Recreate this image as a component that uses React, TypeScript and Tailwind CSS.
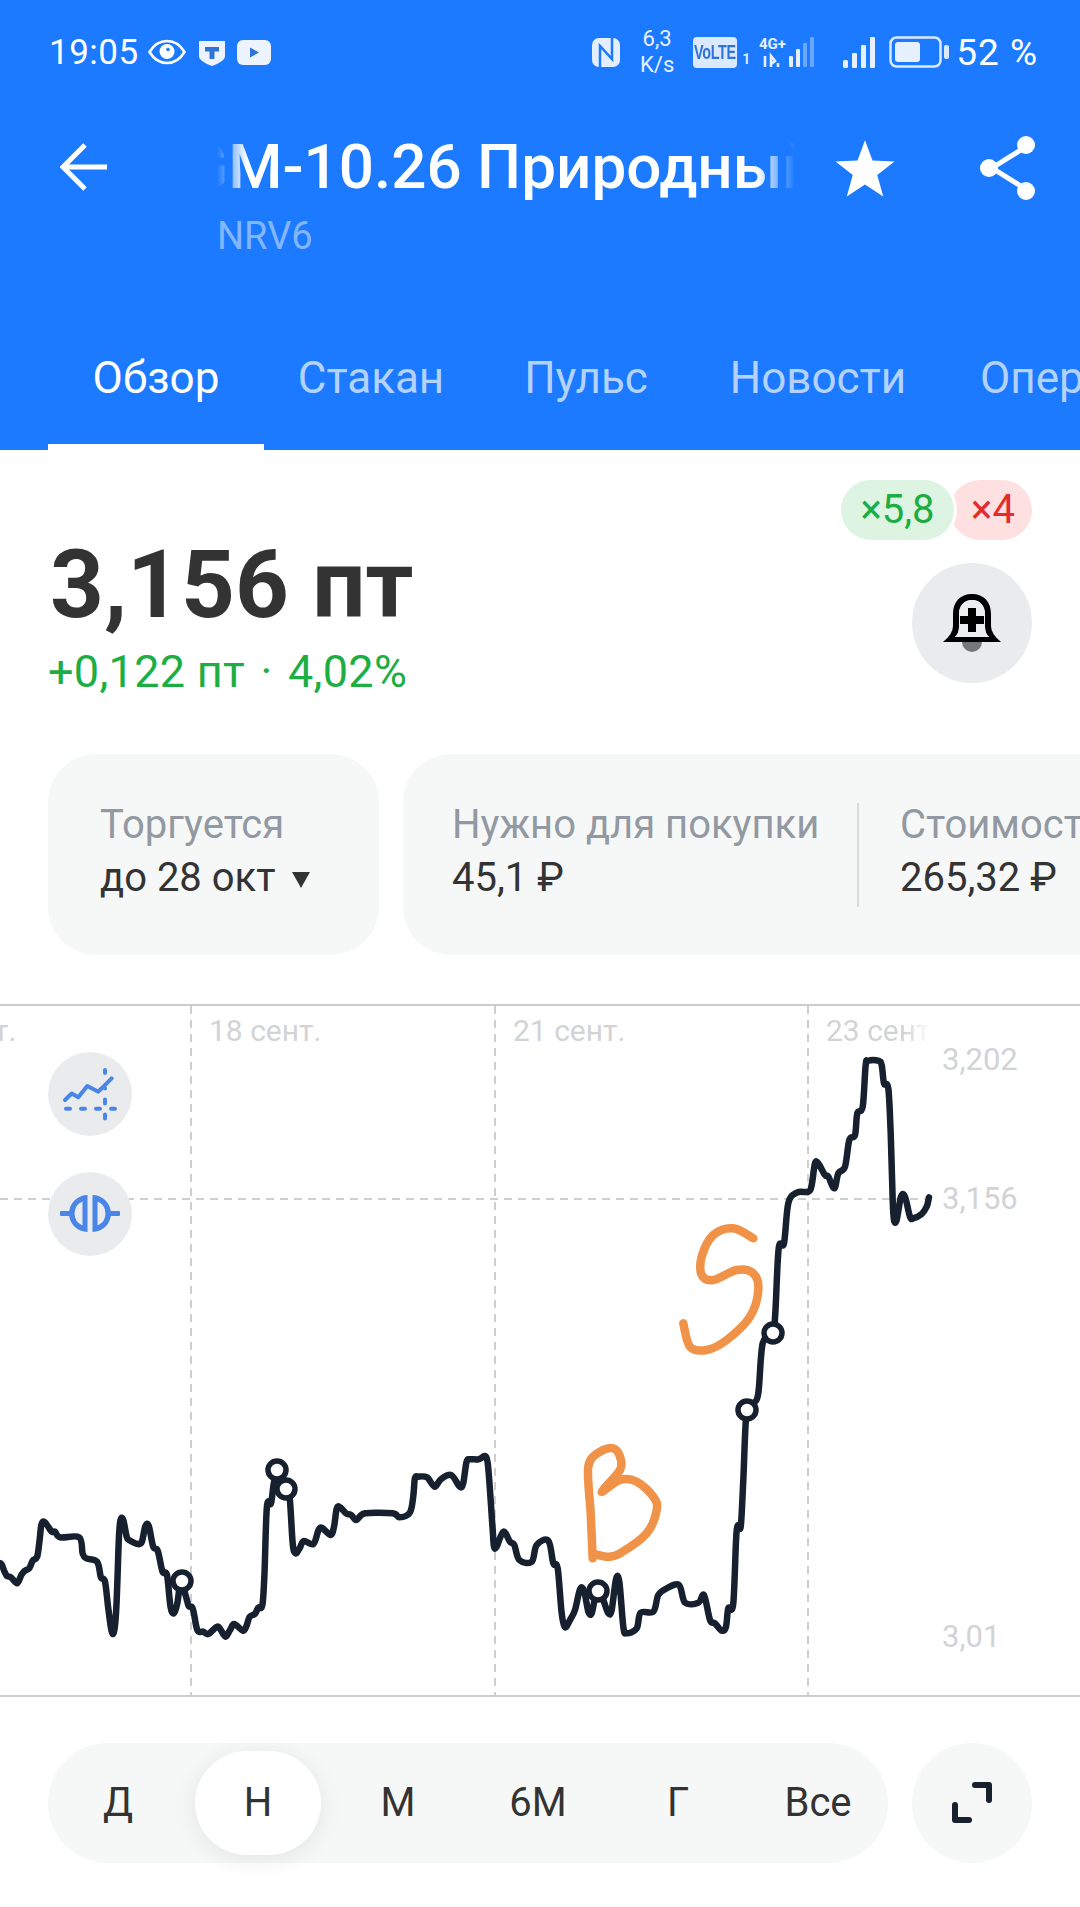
const FONT = "font-['Roboto','Noto_Sans',sans-serif]";

// chart points as read from the picture, page coordinates
type Pt = [number, number];

const fromWide = (pts: Pt[]): Pt[] => pts.map(([x, y]) => [x / 2.904, 1340 + y / 3]);
const fromLower = (pts: Pt[]): Pt[] => pts.map(([x, y]) => [480 + x / 3, 1180 + y / 3]);
const fromUpper = (pts: Pt[]): Pt[] => pts.map(([x, y]) => [700 + x / 3, 1000 + y / 3]);

const PRICE_LINE: Pt[] = [
  ...fromWide([
    [-6, 668], [4, 672], [12, 692], [20, 708], [32, 712], [50, 730], [62, 705], [72, 692], [85, 685], [95, 662], [108, 650],
    [115, 600], [120, 555], [128, 545], [140, 560], [150, 575], [160, 575], [175, 592], [230, 592], [240, 640], [250, 655],
    [282, 665], [293, 712], [305, 725], [315, 810], [327, 882], [337, 820], [345, 600], [350, 540], [358, 540], [368, 590],
    [375, 600], [400, 612], [412, 605], [422, 558], [432, 558], [445, 620], [458, 632], [472, 695], [485, 705], [495, 800],
    [505, 820], [515, 790], [525, 725], [540, 770], [548, 798], [560, 806], [573, 870], [590, 875], [605, 882], [630, 860],
    [640, 868], [655, 890], [668, 870], [680, 852], [705, 872], [715, 860], [725, 830], [740, 822], [750, 803], [762, 795],
    [768, 700], [775, 500], [787, 490], [795, 430], [806, 392], [822, 420], [835, 450], [842, 480], [850, 610], [858, 640], [870, 625],
    [882, 603], [910, 612], [925, 570], [935, 563], [960, 585], [970, 560], [978, 505], [988, 502], [1005, 520], [1020, 525],
    [1035, 540], [1060, 520], [1140, 520], [1160, 532], [1190, 518], [1200, 470], [1205, 415], [1215, 410], [1240, 412],
    [1262, 440], [1280, 418], [1310, 405], [1335, 440], [1345, 430], [1355, 365], [1365, 358], [1390, 358],
  ]),
  ...fromLower([
    [18, 830], [26, 880], [38, 1050], [42, 1100], [50, 1100], [70, 1055], [90, 1085], [103, 1095], [118, 1140], [155, 1145],
    [170, 1095], [205, 1082], [220, 1150], [233, 1165], [245, 1300], [255, 1342], [270, 1320], [285, 1290], [300, 1228],
    [312, 1232], [325, 1295], [335, 1300], [345, 1255], [356, 1232], [370, 1260], [385, 1300], [395, 1290], [408, 1198],
    [418, 1205], [430, 1340], [440, 1360], [470, 1345], [482, 1298], [520, 1295], [535, 1245], [560, 1225], [597, 1215],
    [615, 1268], [655, 1268], [672, 1245], [690, 1320], [705, 1330], [725, 1352], [738, 1340], [745, 1285], [760, 1270],
    [770, 1050], [782, 1040], [790, 900], [800, 690], [820, 670], [835, 640], [848, 490], [878, 460],
  ]),
  ...fromUpper([
    [226, 940], [236, 745], [252, 730], [265, 610], [290, 578], [325, 575], [335, 555], [345, 490], [355, 490], [375, 525], [385, 530],
    [403, 565], [415, 520], [435, 500], [448, 420], [465, 405], [472, 340], [488, 320], [497, 195], [505, 182], [535, 182],
    [545, 195], [552, 250], [565, 265], [572, 400], [578, 600], [582, 660], [590, 660], [603, 590], [615, 590], [630, 650],
    [640, 655], [665, 642], [680, 620], [687, 592],
  ]),
];

const MARKERS: Pt[] = [[182, 1581], [277, 1470], [286, 1489], [598, 1591], [747, 1410], [773, 1333]];

const LETTER_B: Pt[] = fromLower([
  [338, 1135], [332, 1000], [325, 860], [360, 815], [400, 805], [420, 830], [420, 870], [365, 935], [420, 900], [470, 905],
  [520, 950], [530, 990], [500, 1060], [420, 1120], [380, 1130], [338, 1120],
]);

const LETTER_S: Pt[] = fromLower([
  [820, 175], [760, 145], [700, 165], [665, 230], [665, 285], [700, 300], [770, 270], [820, 280], [835, 330], [810, 410],
  [740, 480], [680, 510], [630, 500], [610, 430],
]);

function smoothPath(pts: Pt[]) {
  const k = 1 / 6;
  let d = `M${pts[0][0].toFixed(1)} ${pts[0][1].toFixed(1)}`;
  for (let i = 0; i < pts.length - 1; i++) {
    const p0 = pts[Math.max(i - 1, 0)];
    const p1 = pts[i];
    const p2 = pts[i + 1];
    const p3 = pts[Math.min(i + 2, pts.length - 1)];
    const c1x = p1[0] + (p2[0] - p0[0]) * k;
    const c1y = p1[1] + (p2[1] - p0[1]) * k;
    const c2x = p2[0] - (p3[0] - p1[0]) * k;
    const c2y = p2[1] - (p3[1] - p1[1]) * k;
    d += `C${c1x.toFixed(1)} ${c1y.toFixed(1)} ${c2x.toFixed(1)} ${c2y.toFixed(1)} ${p2[0].toFixed(1)} ${p2[1].toFixed(1)}`;
  }
  return d;
}

function StatusBar() {
  return (
    <div className="flex h-[100px] items-center pl-[49px] pr-[42px] pt-[4px] text-white">
      <span className="text-[35px] leading-none w-[99px] tracking-[0.5px]">19:05</span>
      <svg width="38" height="26" viewBox="0 0 38 26" className="mr-[13px]">
        <path d="M1.5 13C6 5.5 12 2 19 2s13 3.500 17.500 11C32 20.500 26 24 19 24S6 20.500 1.500 13Z" fill="none" stroke="white" strokeWidth="2.6" />
        <circle cx="19" cy="12.500" r="7.500" fill="white" />
        <circle cx="20" cy="10.500" r="1.800" fill="#1b7aff" />
      </svg>
      <svg width="26" height="27" viewBox="0 0 26 27" className="mr-[12px]">
        <path d="M0 2h26v15c0 4-6 7.500-13 10C6 24.500 0 21 0 17Z" fill="#eef4ff" />
        <path d="M6 8h14v4.500h-4.500V20h-5v-7.500H6Z" fill="#2f73d6" />
      </svg>
      <svg width="34" height="25" viewBox="0 0 34 25" className="mr-auto">
        <rect width="34" height="25" rx="6" fill="#eef4ff" />
        <path d="M13 7.500 22 12.500 13 17.500Z" fill="#2f73d6" />
      </svg>

      <svg width="28" height="29" viewBox="0 0 28 29" className="mr-[19px]">
        <rect width="28" height="29" rx="7" fill="#e3eeff" />
        <path d="M8 29V8L20 21V0" fill="none" stroke="#1b7aff" strokeWidth="2.500" />
      </svg>
      <div className="flex flex-col items-center w-[36px] mr-[18px] text-[22px] leading-[26px] text-[#e6f0ff]">
        <span>6,3</span>
        <span>K/s</span>
      </div>
      <div className="flex h-[31px] w-[44px] items-center justify-center overflow-hidden rounded-[4px] bg-[#dbe9ff] text-[20px] font-bold tracking-[-0.5px] text-[#2f73d6] mr-[3px] font-['Liberation_Sans_Narrow','Liberation_Sans',sans-serif]">
        <span className="scale-x-[0.72]">VoLTE</span>
      </div>
      <span className="self-end mb-[30px] text-[14px] font-bold text-[#dbe9ff] w-[19px] pl-[2px]">1</span>
      <svg width="56" height="34" viewBox="0 0 56 34" className="mr-[28px]">
        <text x="0" y="14" fontSize="15" fontWeight="700" fill="#e6f0ff" fontFamily="Roboto">4G+</text>
        <path d="M6 32V21M12 32V21l4 5-4 3M19 32v-4" fill="none" stroke="#e6f0ff" strokeWidth="2.600" />
        <rect x="30" y="21" width="4" height="11" rx="1" fill="#e6f0ff" />
        <rect x="37" y="14" width="4" height="18" rx="1" fill="#e6f0ff" />
        <rect x="44" y="8" width="4" height="24" rx="1" fill="#6aa7ff" />
        <rect x="51" y="2" width="4" height="30" rx="1" fill="#6aa7ff" />
      </svg>
      <svg width="33" height="32" viewBox="0 0 33 32" className="mr-[13px]">
        <rect x="0" y="24" width="5" height="8" rx="1.500" fill="#e6f0ff" />
        <rect x="9" y="17" width="5" height="15" rx="1" fill="#e6f0ff" />
        <rect x="18" y="9" width="5" height="23" rx="1" fill="#e6f0ff" />
        <rect x="27" y="1" width="5" height="31" rx="1" fill="#e6f0ff" />
      </svg>
      <svg width="62" height="32" viewBox="0 0 62 32" className="mr-[5px]">
        <rect x="1.500" y="1.500" width="50" height="29" rx="6" fill="none" stroke="#dbe9ff" strokeWidth="2.500" />
        <rect x="6" y="6" width="25" height="20" rx="3" fill="#e6f0ff" />
        <rect x="55" y="9" width="5" height="14" rx="2" fill="#dbe9ff" />
      </svg>
      <span className="text-[37px] leading-none tracking-[1px]">52 %</span>
    </div>
  );
}

function TitleBar() {
  return (
    <div className="flex h-[138px] items-start pl-[60px] pr-[44px]">
      <svg width="50" height="50" viewBox="0 0 50 50" className="mt-[42px] w-[50px] shrink-0">
        <path d="M47 25H4M25 3 3 25l22 22" fill="none" stroke="white" strokeWidth="5" strokeLinejoin="miter" />
      </svg>
      <div className="ml-[107px] w-[578px] shrink-0 pt-[28px]">
        <div className="h-[78px] overflow-hidden [mask-image:linear-gradient(to_right,transparent_0,black_30px,black_540px,transparent_578px)]">
          <div className="whitespace-nowrap -ml-[31px] text-[62px] font-medium leading-[78px] text-white">GM-10.26 Природный газ</div>
        </div>
        <div className="text-[38px] leading-[40px] text-[#83b6ff] mt-[10px]">NRV6</div>
      </div>
      <svg width="60" height="58" viewBox="0 0 24 23.200" className="ml-[40px] mt-[39px] shrink-0">
        <path d="M12 0.500 15 8.600 23.800 9 16.900 14.400 19.300 23 12 18.200 4.700 23 7.100 14.400 0.200 9 9 8.600Z" fill="white" />
      </svg>
      <svg width="58" height="64" viewBox="0 0 58 64" className="ml-[85px] mt-[36px] shrink-0">
        <path d="M44 12 12 32l32 20" fill="none" stroke="white" strokeWidth="5" />
        <circle cx="46" cy="9" r="9" fill="white" />
        <circle cx="9" cy="32" r="9" fill="white" />
        <circle cx="46" cy="55" r="9" fill="white" />
      </svg>
    </div>
  );
}

const TABS = [
  { label: 'Обзор', width: 'w-[216px]', active: true },
  { label: 'Стакан', width: 'w-[214px]', active: false },
  { label: 'Пульс', width: 'w-[216px]', active: false },
  { label: 'Новости', width: 'w-[248px]', active: false },
  { label: 'Операции', width: 'w-[240px]', active: false },
];

function Tabs() {
  return (
    <div className="flex h-[212px] items-start overflow-hidden pl-[48px] pt-[114px]">
      {TABS.map((tab) => (
        <div key={tab.label} className={`${tab.width} shrink-0 h-[98px] relative`}>
          <div
            className={`text-[44px] leading-[52px] whitespace-nowrap ${
              tab.label === 'Операции' ? 'pl-[38px]' : 'text-center'
            } ${tab.active ? 'text-white' : 'text-[#b3d2ff]'}`}
          >
            {tab.label}
          </div>
          {tab.active && <div className="absolute inset-x-0 bottom-0 h-[6px] bg-white" />}
        </div>
      ))}
    </div>
  );
}

function PriceBlock() {
  return (
    <div className="flex h-[304px] justify-between pl-[50px] pr-[48px]">
      <div className="pt-[80px]">
        <div className="text-[94px] font-bold leading-[110px] text-[#333333]">3,156 пт</div>
        <div className="mt-[7px] -ml-[2px] text-[45px] leading-[50px] tracking-[0.3px] text-[#1cae42]">
          +0,122 пт <span className="mx-[4px]">·</span> 4,02%
        </div>
      </div>
      <div className="flex flex-col items-end pt-[30px]">
        <div className="flex h-[60px]">
          <div className="relative z-10 flex w-[113px] items-center justify-center rounded-full bg-[#dcf4e1] text-[40px] text-[#1cae42] ring-[3px] ring-white">
            ×5,8
          </div>
          <div className="flex w-[82px] -ml-[4px] items-center justify-center rounded-full bg-[#ffe0e1] text-[40px] text-[#e32c2c] pl-[4px]">
            ×4
          </div>
        </div>
        <div className="mt-[23px] flex h-[120px] w-[120px] items-center justify-center rounded-full bg-[#e9ebed]">
          <svg width="60" height="60" viewBox="0 0 60 60">
            <circle cx="30" cy="49" r="10" fill="#777777" />
            <path
              fillRule="evenodd"
              d="M30 1C18 1 11 9 11 21V33Q11 41 1 49H59Q49 41 49 33V21C49 9 42 1 30 1ZM30 7C22 7 17 13 17 21V34Q17 40 13 44H47Q43 40 43 34V21C43 13 38 7 30 7Z"
              fill="#000"
            />
            <path d="M17 21C17 13 22 7 30 7s13 6 13 14V34Q43 40 47 44H13Q17 40 17 34Z" fill="#eceeef" />
            <path d="M26 15h8v8h8v8h-8v8h-8v-8h-8v-8h8Z" fill="#000" />
          </svg>
        </div>
      </div>
    </div>
  );
}

function InfoCards() {
  return (
    <div className="flex h-[201px] gap-[24px] overflow-hidden pl-[48px]">
      <div className="w-[331px] shrink-0 rounded-[48px] bg-[#f6f8f8] pl-[52px] pt-[46px]">
        <div className="text-[40px] leading-[50px] text-[#9299a2]">Торгуется</div>
        <div className="flex items-center mt-[3px] text-[40px] leading-[50px] text-[#333333]">
          до 28 окт
          <svg width="20" height="18" viewBox="0 0 20 18" className="ml-[16px] mt-[4px]">
            <path d="M1 1h18L10 17Z" fill="#333333" />
          </svg>
        </div>
      </div>
      <div className="flex w-[760px] shrink-0 rounded-[48px] bg-[#f6f8f8] pl-[49px] pt-[46px]">
        <div className="w-[405px]">
          <div className="text-[40px] leading-[50px] text-[#9299a2] whitespace-nowrap">Нужно для покупки</div>
          <div className="mt-[3px] text-[40px] leading-[50px] text-[#333333]">45,1 ₽</div>
        </div>
        <div className="mt-[3px] h-[104px] w-[2px] bg-[#d9dcdf]" />
        <div className="pl-[41px]">
          <div className="text-[40px] leading-[50px] text-[#9299a2] whitespace-nowrap">Стоимость</div>
          <div className="mt-[3px] text-[40px] leading-[50px] text-[#333333]">265,32 ₽</div>
        </div>
      </div>
    </div>
  );
}

function ChartLabel({ className, children }: { className: string; children: React.ReactNode }) {
  return <span className={`absolute leading-[36px] text-[#d2d3d5] ${className}`}>{children}</span>;
}

function Chart() {
  return (
    <div className="relative mt-[49px] h-[693px] border-y-2 border-[#cccccc]">
      <svg className="absolute left-0 top-0 h-[689px] w-[1080px]" viewBox="0 1006 1080 689" fill="none">
        <g stroke="#cfcfcf" strokeWidth="2" strokeDasharray="8 6">
          <path d="M191 1006V1695M495 1006V1695M808 1006V1695" />
          <path d="M0 1199H928" />
        </g>
        <path d={smoothPath(PRICE_LINE)} stroke="#16202e" strokeWidth="6.500" strokeLinejoin="round" strokeLinecap="round" />
        {MARKERS.map(([x, y]) => (
          <circle key={`${x}-${y}`} cx={x} cy={y} r="9" fill="white" stroke="#16202e" strokeWidth="5.500" />
        ))}
        <path d={smoothPath(LETTER_B)} stroke="#f09247" strokeWidth="8.500" strokeLinejoin="round" strokeLinecap="round" />
        <path d={smoothPath(LETTER_S)} stroke="#f09247" strokeWidth="8.500" strokeLinejoin="round" strokeLinecap="round" />
      </svg>

      <ChartLabel className="-left-[6px] top-[7px] text-[30px]">т.</ChartLabel>
      <ChartLabel className="left-[209px] top-[7px] text-[30px]">18 сент.</ChartLabel>
      <ChartLabel className="left-[513px] top-[7px] text-[30px]">21 сент.</ChartLabel>
      <span className="absolute left-[826px] top-[7px] w-[104px] overflow-hidden whitespace-nowrap text-[30px] leading-[36px] text-[#d2d3d5] [mask-image:linear-gradient(to_right,black_75%,transparent_100%)]">
        23 сент.
      </span>
      <ChartLabel className="left-[942px] top-[36px] text-[31px]">3,202</ChartLabel>
      <ChartLabel className="left-[942px] top-[175px] text-[31px]">3,156</ChartLabel>
      <ChartLabel className="left-[942px] top-[613px] text-[31px]">3,01</ChartLabel>

      <button className="absolute left-[48px] top-[46px] flex h-[84px] w-[84px] rounded-full bg-[#e9ebed]">
        <svg width="84" height="84" viewBox="0 0 84 84" fill="none" stroke="#4a86e8" strokeLinecap="round">
          <path d="M17 48 23.700 41.500 30.300 45.300 39.300 34 50.300 39.700 63.700 26.300" strokeWidth="4" strokeLinejoin="round" />
          <path d="M18 56.700h4M33 56.700h4M48 56.700h4M63 56.700h4M57 18v3M57 36v0.500M57 47.500v4M57 62.500v4" strokeWidth="4" />
        </svg>
      </button>
      <button className="absolute left-[48px] top-[166px] flex h-[84px] w-[84px] rounded-full bg-[#e9ebed]">
        <svg width="84" height="84" viewBox="0 0 84 84" fill="#4a86e8">
          <path fillRule="evenodd" d="M39.500 23A18.500 18.500 0 0 0 39.500 60ZM34.500 29.500A13 13 0 0 0 34.500 53.500Z" />
          <path fillRule="evenodd" d="M44.500 23A18.500 18.500 0 0 1 44.500 60ZM49.500 29.500A13 13 0 0 1 49.500 53.500Z" />
          <rect x="12" y="39" width="13" height="5" rx="1" />
          <rect x="59" y="39" width="13" height="5" rx="1" />
        </svg>
      </button>
    </div>
  );
}

function Periods() {
  return (
    <div className="mt-[46px] flex items-center pl-[48px] pr-[48px]">
      <div className="grid h-[120px] w-[840px] grid-cols-6 items-center rounded-full bg-[#f6f8f8]">
        {['Д', 'Н', 'М', '6М', 'Г', 'Все'].map((label) => (
          <div key={label} className="flex justify-center">
            <div
              className={`flex h-[104px] w-[126px] items-center justify-center rounded-full text-[40px] text-[#333333] ${
                label === 'Н' ? 'bg-white shadow-[0_4px_24px_rgba(0,0,0,0.08)]' : ''
              }`}
            >
              {label}
            </div>
          </div>
        ))}
      </div>
      <div className="ml-[24px] flex h-[120px] w-[120px] items-center justify-center rounded-full bg-[#f6f8f8]">
        <svg width="44" height="44" viewBox="0 0 44 44" fill="none" stroke="#16202e" strokeWidth="6" strokeLinecap="round" strokeLinejoin="round">
          <path d="M25 4H39V19M5 24V39H19" />
        </svg>
      </div>
    </div>
  );
}

export default function App() {
  return (
    <div className={`h-[1907px] w-[1080px] overflow-hidden bg-white ${FONT}`}>
      <header className="h-[450px] bg-[#1b7aff]">
        <StatusBar />
        <TitleBar />
        <Tabs />
      </header>
      <PriceBlock />
      <InfoCards />
      <Chart />
      <Periods />
    </div>
  );
}
